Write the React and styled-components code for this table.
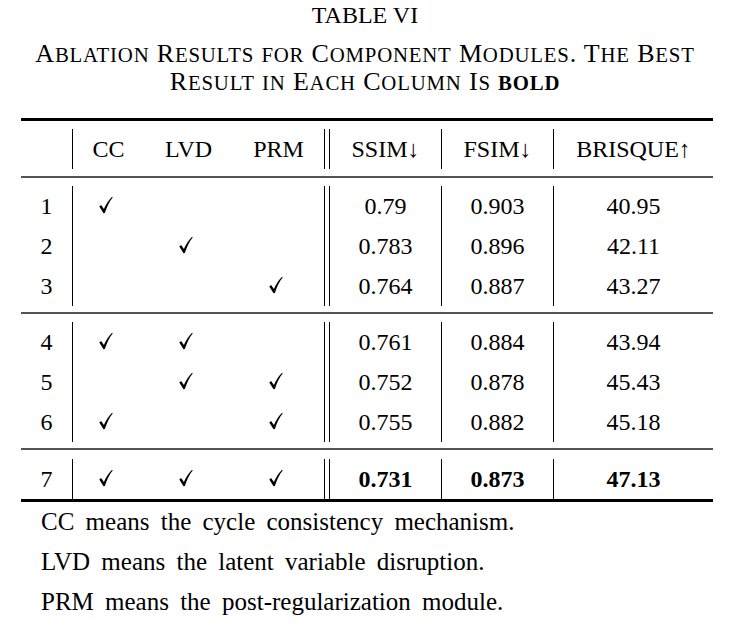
import React from "react";
import styled, { createGlobalStyle } from "styled-components";

const GlobalStyle = createGlobalStyle`
  body {
    margin: 0;
    background: #fff;
    color: #000;
    font-family: "Liberation Serif", "Times New Roman", serif;
  }
`;

const COLS = "51px 72px 89px 91px 6px 111px 112px 160px";

const rows = [
  { id: 1, cc: true, lvd: false, prm: false, ssim: "0.79", fsim: "0.903", brisque: "40.95" },
  { id: 2, cc: false, lvd: true, prm: false, ssim: "0.783", fsim: "0.896", brisque: "42.11" },
  { id: 3, cc: false, lvd: false, prm: true, ssim: "0.764", fsim: "0.887", brisque: "43.27" },
  { id: 4, cc: true, lvd: true, prm: false, ssim: "0.761", fsim: "0.884", brisque: "43.94" },
  { id: 5, cc: false, lvd: true, prm: true, ssim: "0.752", fsim: "0.878", brisque: "45.43" },
  { id: 6, cc: true, lvd: false, prm: true, ssim: "0.755", fsim: "0.882", brisque: "45.18" },
  { id: 7, cc: true, lvd: true, prm: true, ssim: "0.731", fsim: "0.873", brisque: "47.13", best: true },
];

const groups = [[0, 1, 2], [3, 4, 5], [6]];

const notes = [
  "CC means the cycle consistency mechanism.",
  "LVD means the latent variable disruption.",
  "PRM means the post-regularization module.",
];

// fake small caps: lower-case runs are upper-cased at a smaller size
const SmallCaps = ({ text }) =>
  text.match(/[a-z]+|[^a-z]+/g).map((tok, i) =>
    /^[a-z]+$/.test(tok) ? <Small key={i}>{tok}</Small> : <React.Fragment key={i}>{tok}</React.Fragment>
  );

const Check = () => (
  <CheckSvg viewBox="0 0 14 17" aria-label="✓">
    <path d="M0.3 9.9 L2.1 8.6 L4.9 12.6 C6.8 7.9 9.5 3.4 13.1 0.2 L13.7 0.9 C10.6 4.5 7.8 9.8 5.9 16.6 L4.5 16.8 Z" />
  </CheckSvg>
);

const Row = ({ r }) => (
  <>
    <Cell>{r.id}</Cell>
    <Cell $line>{r.cc && <Check />}</Cell>
    <Cell>{r.lvd && <Check />}</Cell>
    <Cell>{r.prm && <Check />}</Cell>
    <DoubleBar />
    <Cell $bold={r.best}>{r.ssim}</Cell>
    <Cell $line $bold={r.best}>{r.fsim}</Cell>
    <Cell $line $bold={r.best}>{r.brisque}</Cell>
  </>
);

export default function App() {
  return (
    <Page>
      <GlobalStyle />
      <Caption>
        <Title>TABLE VI</Title>
        <Subtitle>
          <SubLine>
            <SmallCaps text="Ablation Results for Component Modules. The Best" />
          </SubLine>
          <SubLine>
            <SmallCaps text="Result in Each Column Is " />
            <Bold>
              <SmallCaps text="bold" />
            </Bold>
          </SubLine>
        </Subtitle>
      </Caption>

      <Table>
        <Rule $heavy />
        <Section $top={8} $bottom={7}>
          <Cell />
          <Cell $line>CC</Cell>
          <Cell>LVD</Cell>
          <Cell>PRM</Cell>
          <DoubleBar />
          <Cell>SSIM↓</Cell>
          <Cell $line>FSIM↓</Cell>
          <Cell $line>BRISQUE↑</Cell>
        </Section>
        {groups.map((g, gi) => (
          <React.Fragment key={gi}>
            <Rule />
            <Section $top={gi === 2 ? 9 : 8} $bottom={gi === 2 ? 0 : 6}>
              {g.map((i) => (
                <Row key={i} r={rows[i]} />
              ))}
            </Section>
          </React.Fragment>
        ))}
        <Rule $heavy />
      </Table>

      <Notes>
        {notes.map((n) => (
          <Note key={n}>{n}</Note>
        ))}
      </Notes>
    </Page>
  );
}

const Page = styled.div`
  width: 730px;
  padding-top: 1px;
`;

const Caption = styled.div`
  text-align: center;
`;

const Title = styled.div`
  font-size: 24px;
  line-height: 28px;
`;

const Subtitle = styled.div`
  margin-top: 11px;
  font-size: 26px;
  line-height: 28.4px;
  letter-spacing: 0.8px;
`;

const SubLine = styled.div`
  white-space: nowrap;
`;

const Small = styled.span`
  font-size: 0.8em;
  line-height: 1;
  text-transform: uppercase;
`;

const Bold = styled.span`
  font-weight: 700;
`;

const Table = styled.div`
  margin: 21px 0 0 21px;
  width: 692px;
`;

const Rule = styled.div`
  height: ${(p) => (p.$heavy ? "3px" : "2px")};
  background: ${(p) => (p.$heavy ? "#000" : "#555")};
`;

const Section = styled.div`
  display: grid;
  grid-template-columns: ${COLS};
  grid-auto-rows: 40px;
  padding: ${(p) => p.$top}px 0 ${(p) => p.$bottom}px;
`;

const Cell = styled.div`
  display: flex;
  align-items: center;
  justify-content: center;
  font-size: 24px;
  line-height: 40px;
  white-space: nowrap;
  font-weight: ${(p) => (p.$bold ? 700 : 400)};
  border-left: ${(p) => (p.$line ? "1px solid #000" : "none")};
`;

const DoubleBar = styled.div`
  border-left: 1px solid #000;
  border-right: 1px solid #000;
`;

const CheckSvg = styled.svg`
  width: 14px;
  height: 18px;
  fill: #000;
  margin: 0 5px 2px 0;
`;

const Notes = styled.div`
  padding-left: 41px;
`;

const Note = styled.div`
  font-size: 25px;
  line-height: 40px;
  word-spacing: 5px;
  white-space: nowrap;
`;
